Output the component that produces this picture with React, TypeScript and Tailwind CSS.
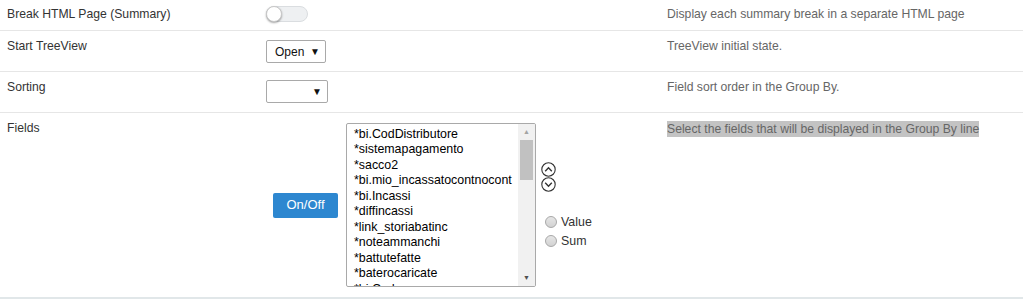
import React from "react";

const items = [
  "*bi.CodDistributore",
  "*sistemapagamento",
  "*sacco2",
  "*bi.mio_incassatocontnocont",
  "*bi.Incassi",
  "*diffincassi",
  "*link_storiabatinc",
  "*noteammanchi",
  "*battutefatte",
  "*baterocaricate",
  "*bi.Cod",
];

function Radio({ label }: { label: string }) {
  return (
    <div className="flex items-center h-[19px]">
      <span className="ml-[4px] w-[12px] h-[12px] rounded-full border border-[#a8a8a8] bg-[linear-gradient(#e6e6e6,#d2d2d2)]" />
      <span className="ml-[4px] text-[12.4px] text-[#333]">{label}</span>
    </div>
  );
}

function Chevron({ up }: { up: boolean }) {
  return (
    <svg width="15" height="15" viewBox="0 0 15 15" className="block">
      <circle cx="7.5" cy="7.5" r="6.7" fill="white" stroke="#333" strokeWidth="1.1" />
      {up ? (
        <path d="M4.2 9.2 L7.5 5.8 L10.8 9.2" fill="none" stroke="#333" strokeWidth="1.4" />
      ) : (
        <path d="M4.2 5.8 L7.5 9.2 L10.8 5.8" fill="none" stroke="#333" strokeWidth="1.4" />
      )}
    </svg>
  );
}

export default function App() {
  return (
    <div className="w-[1023px] h-[300px] overflow-hidden bg-white text-[12.2px] font-['Liberation_Sans',Arial,sans-serif]">
      {/* Row 1 */}
      <div className="flex h-[31px] border-b border-[#e6e6e6]">
        <div className="w-[266px] pl-[7px] pt-[5px] text-[#333]">Break HTML Page (Summary)</div>
        <div className="w-[401px] pt-[6px]">
          <div className="relative w-[42px] h-[16px] rounded-full bg-[#eef0f2] border border-[#dadde0]">
            <div className="absolute -left-[1px] -top-[1px] w-[16px] h-[16px] rounded-full bg-white border border-[#c8c8c8] shadow-[0_1px_2px_rgba(0,0,0,0.35)]" />
          </div>
        </div>
        <div className="flex-1 pt-[5px] text-[#666]">Display each summary break in a separate HTML page</div>
      </div>
      {/* Row 2 */}
      <div className="flex h-[41px] border-b border-[#e6e6e6]">
        <div className="w-[266px] pl-[7px] pt-[6px] text-[#333]">Start TreeView</div>
        <div className="w-[401px] pt-[9px]">
          <div className="flex items-center justify-between w-[60px] h-[23px] border border-[#a9a9a9] rounded-[2px] pl-[8px] pr-[5px] text-[12px] text-[#111]">
            <span>Open</span>
            <span className="text-[10px]">▼</span>
          </div>
        </div>
        <div className="flex-1 pt-[6px] text-[#666]">TreeView initial state.</div>
      </div>
      {/* Row 3 */}
      <div className="flex h-[41px] border-b border-[#e6e6e6]">
        <div className="w-[266px] pl-[7px] pt-[6px] text-[#333]">Sorting</div>
        <div className="w-[401px] pt-[8px]">
          <div className="flex items-center justify-end w-[62px] h-[23px] border border-[#a9a9a9] rounded-[2px] pr-[5px] text-[12px] text-[#111]">
            <span className="text-[10px]">▼</span>
          </div>
        </div>
        <div className="flex-1 pt-[6px] text-[#666]">Field sort order in the Group By.</div>
      </div>
      {/* Row 4 */}
      <div className="flex h-[186px] border-b-2 border-[#e1e7e9]">
        <div className="w-[266px] pl-[7px] pt-[6px] text-[#333]">Fields</div>
        <div className="w-[401px] flex items-center pl-[7px]">
          <button className="w-[65px] h-[25px] rounded-[2px] bg-[#2d87d0] text-white text-[13px] font-['Liberation_Sans',Arial,sans-serif]">
            On/Off
          </button>
          <div className="ml-[8px] flex w-[190px] h-[164px] border border-[#a9a9a9] rounded-[2px] overflow-hidden">
            <div className="flex-1 pl-[7px] pt-[2.5px] overflow-hidden text-[12.4px] leading-[15.5px] text-black whitespace-nowrap">
              {items.map((it) => (
                <div key={it}>{it}</div>
              ))}
            </div>
            <div className="w-[17px] bg-[#f1f1f1] flex flex-col items-center">
              <div className="h-[16px] flex items-center justify-center text-[7px] text-[#a3a3a3]">▲</div>
              <div className="w-[13px] h-[40px] bg-[#c1c1c1]" />
              <div className="flex-1" />
              <div className="h-[16px] flex items-center justify-center text-[7px] text-[#505050]">▼</div>
            </div>
          </div>
          <div className="ml-[5px] flex flex-col pt-[2px]">
            <Chevron up />
            <Chevron up={false} />
            <div className="mt-[21px]">
              <Radio label="Value" />
              <Radio label="Sum" />
            </div>
          </div>
        </div>
        <div className="flex-1 pt-[7px]">
          <span className="bg-[#c3c3c3] text-[#666] leading-[16px] inline-block">Select the fields that will be displayed in the Group By line</span>
        </div>
      </div>
    </div>
  );
}
